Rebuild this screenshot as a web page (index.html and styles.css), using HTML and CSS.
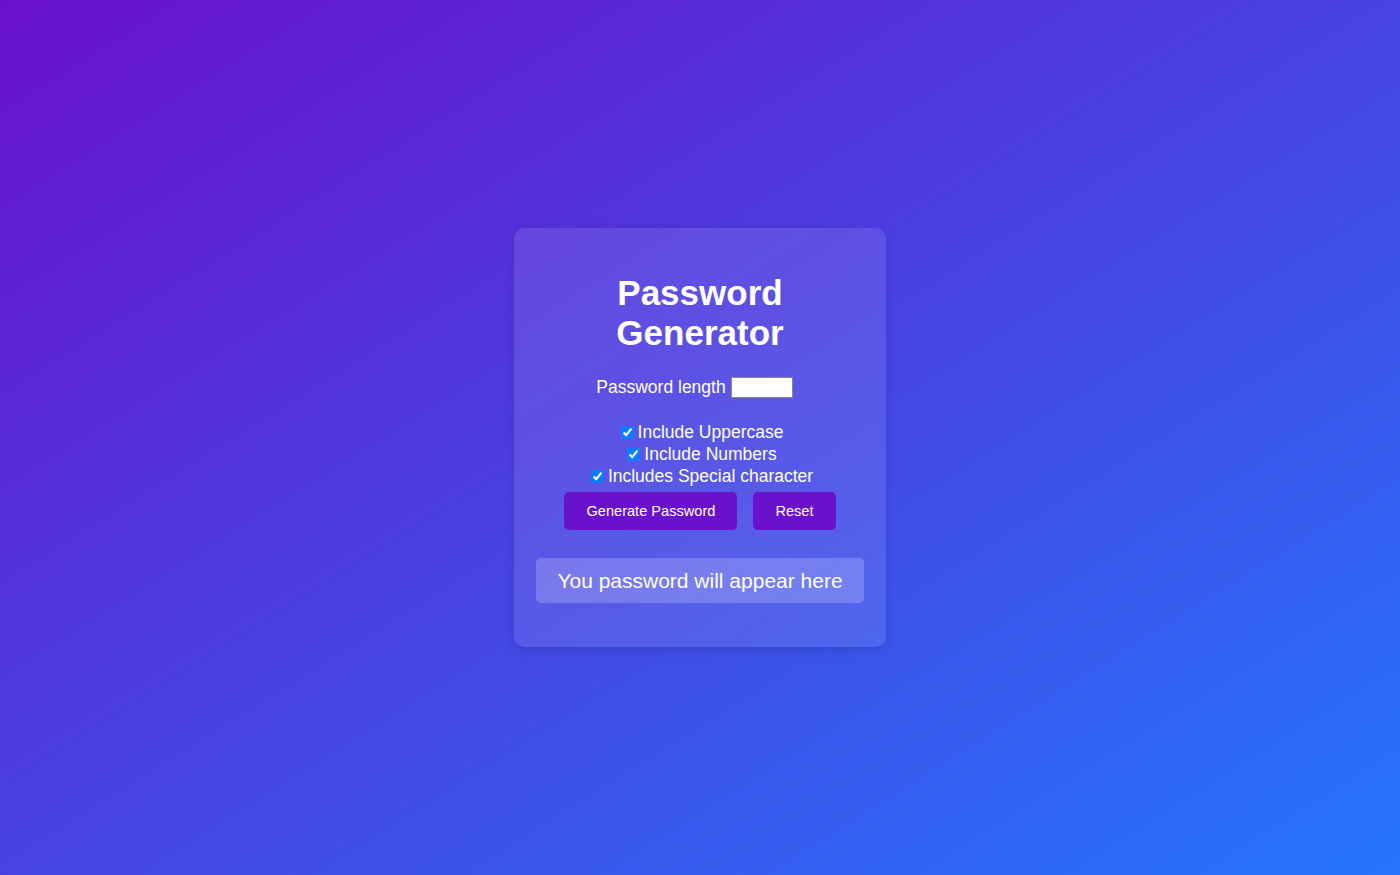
FILE: index.html
```html
<!DOCTYPE html>
<html lang="en">
<head>
<meta charset="utf-8">
<title>Password Generator</title>
<link rel="stylesheet" href="styles.css">
</head>
<body>
<div class="card">
  <h1 class="title">Password Generator</h1>
  <div class="length-row">
    <label for="len">Password length</label>
    <input id="len" class="len-input" type="number">
  </div>
  <div class="options">
    <label class="opt"><input type="checkbox" checked>Include Uppercase</label>
    <label class="opt"><input type="checkbox" checked>Include Numbers</label>
    <label class="opt"><input type="checkbox" checked>Includes Special character</label>
  </div>
  <div class="actions">
    <button class="btn">Generate Password</button>
    <button class="btn">Reset</button>
  </div>
  <div class="output">You password will appear here</div>
</div>
</body>
</html>
```
FILE: styles.css
```css
html, body {
  margin: 0;
  padding: 0;
}
body {
  height: 100vh;
  display: flex;
  align-items: center;
  justify-content: center;
  background: linear-gradient(to right bottom, #6a11cb, #2575fc);
  font-family: "Liberation Sans", Arial, sans-serif;
  color: #fff;
}
.card {
  width: 328px;
  padding: 22px;
  background: rgba(255, 255, 255, 0.1);
  border-radius: 10px;
  box-shadow: 0 4px 12px rgba(0, 0, 0, 0.12);
  text-align: center;
}
.title {
  margin: 23px 0 24px;
  font-size: 35px;
  line-height: 40px;
  font-weight: bold;
}
.length-row {
  display: flex;
  align-items: center;
  justify-content: center;
  gap: 5px;
  height: 21px;
  font-size: 17.5px;
}
.len-input {
  width: 58px;
  height: 17px;
  margin: 0 11px 0 0;
  padding: 1px;
  border: 1px solid #888;
  background: #fff;
  font-size: 13px;
}
.options {
  margin-top: 23px;
  padding-left: 4px;
  display: flex;
  flex-direction: column;
  align-items: center;
  font-size: 17.5px;
  line-height: 22px;
}
.opt {
  display: flex;
  align-items: center;
}
.opt input {
  width: 13px;
  height: 13px;
  margin: 0 4px 0 0;
  accent-color: #0a7cff;
}
.actions {
  margin-top: 5px;
  display: flex;
  justify-content: center;
  gap: 16px;
}
.btn {
  background: #6a11cb;
  color: #fff;
  border: none;
  border-radius: 5px;
  padding: 0 22px;
  height: 38px;
  font-family: "Liberation Sans", Arial, sans-serif;
  font-size: 14.6px;
  cursor: pointer;
}
.output {
  margin: 28px 0 22px;
  height: 45px;
  line-height: 45px;
  background: rgba(255, 255, 255, 0.2);
  border-radius: 5px;
  font-size: 21px;
}
```
